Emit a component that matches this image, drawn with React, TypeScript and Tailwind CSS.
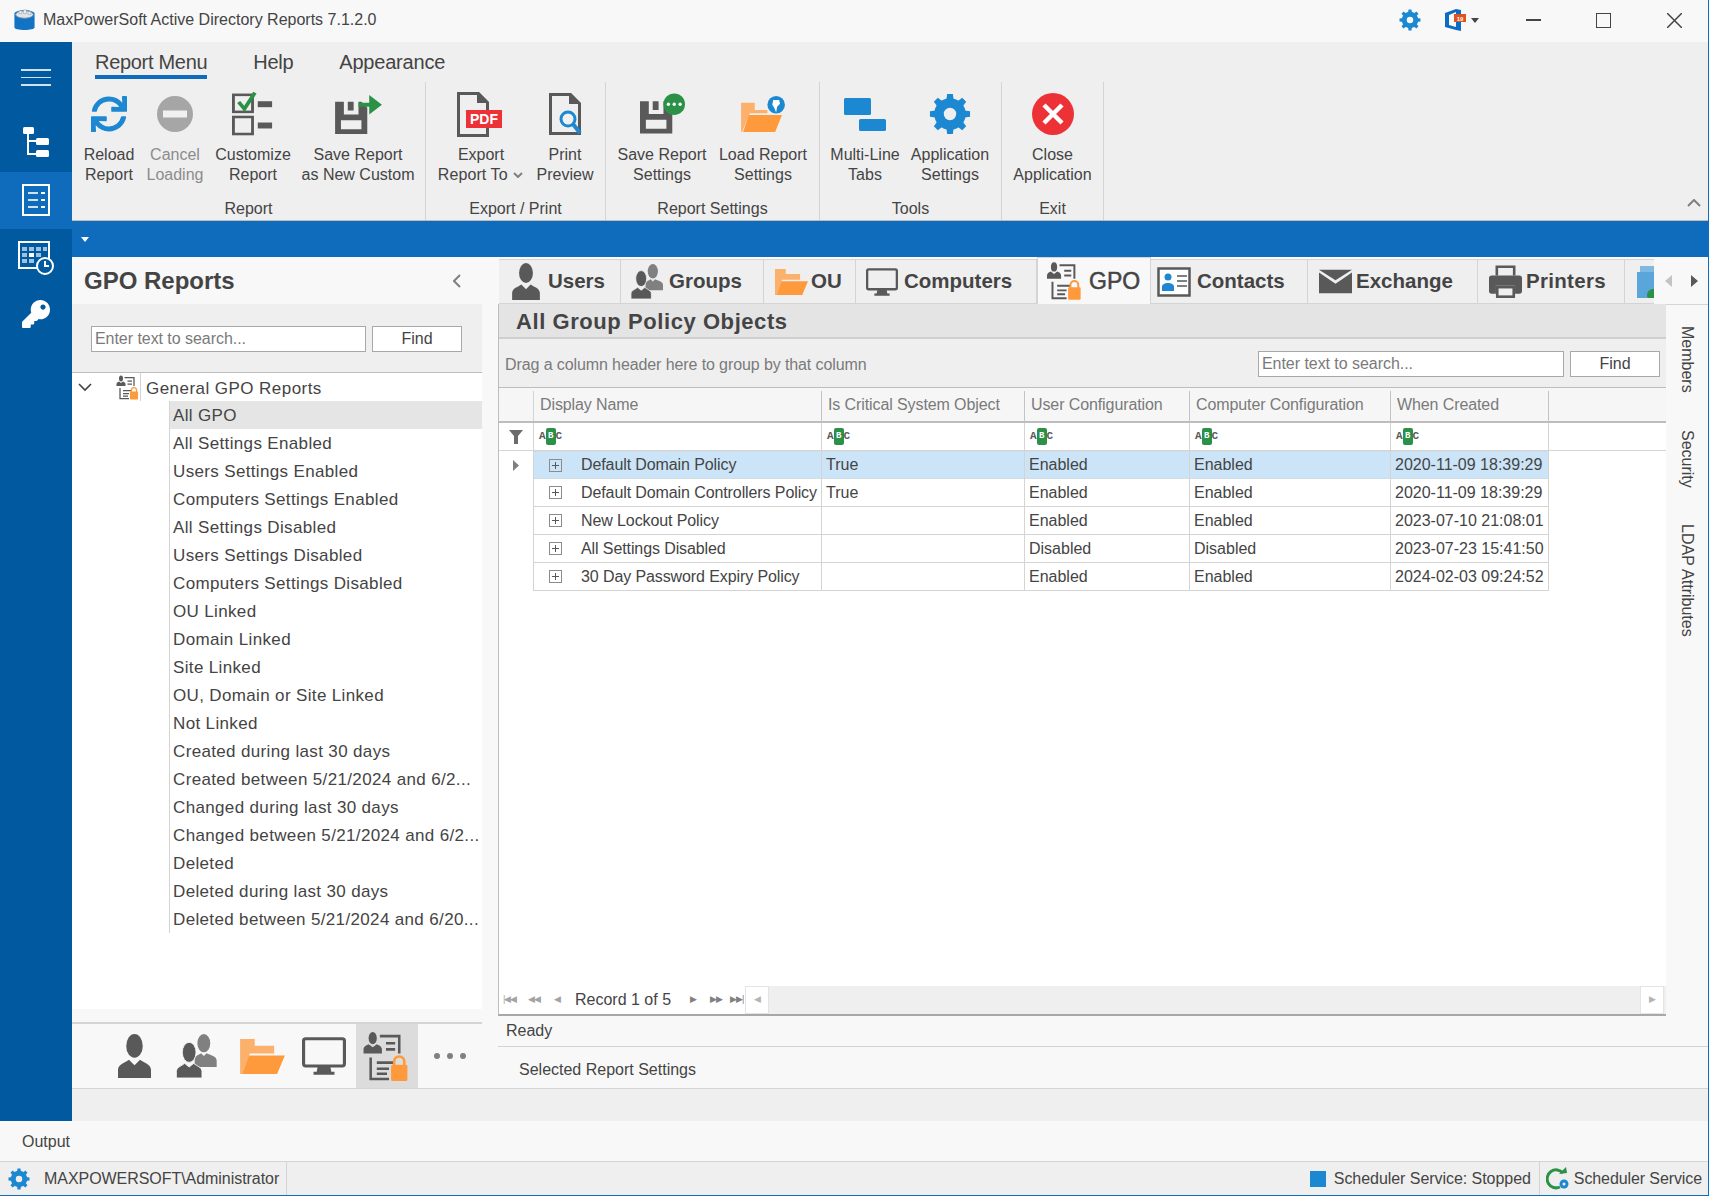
import React from "react";
import { FaKey, FaSync } from "react-icons/fa";

type IconProps = { className?: string };

const Gear = ({ className }: IconProps) => (
  <svg viewBox="0 0 44 44" className={className}>
    <circle cx="22" cy="22" r="11.5" fill="none" stroke="#1c88d1" strokeWidth="10" />
    {[0, 45, 90, 135, 180, 225, 270, 315].map((angle) => (
      <path key={angle} d="M18 9l1-8h6l1 8z" fill="#1c88d1" transform={`rotate(${angle} 22 22)`} />
    ))}
  </svg>
);

const Person = ({ className }: IconProps) => (
  <svg viewBox="0 0 36 48" className={className} fill="#595959">
    <ellipse cx="18" cy="13" rx="9" ry="13" />
    <path d="M0 48v-9c0-6 8-8 12-11l6 6 6-6c4 3 12 5 12 11v9z" />
  </svg>
);

const Group = ({ className }: IconProps) => (
  <svg viewBox="0 0 44 48" className={className}>
    <g fill="#808080">
      <ellipse cx="30" cy="10" rx="7" ry="10" />
      <path d="M20 36v-8c0-4 4-5 7-7l3 3 3-3c4 2 11 3 11 8v7z" />
    </g>
    <g fill="#595959" stroke="#f8f8f8" strokeWidth="1">
      <ellipse cx="14" cy="20" rx="7.5" ry="11" />
      <path d="M0 48v-7c0-5 6-6 9-9l5 4 5-4c3 3 9 4 9 9v7z" />
    </g>
  </svg>
);

const Folder = ({ className }: IconProps) => (
  <svg viewBox="0 0 46 36" className={className}>
    <path d="M0 0h15v7h20v8H10L2 36H0z" fill="#fbb16b" />
    <path d="M9 17h37l-8 19H2z" fill="#ff9a3c" />
  </svg>
);

const Monitor = ({ className }: IconProps) => (
  <svg viewBox="0 0 42 36" className={className}>
    <rect x="1.5" y="1.5" width="39" height="26" rx="2" fill="none" stroke="#595959" strokeWidth="3" />
    <path d="M15 28h12l1 5h3v3H11v-3h3z" fill="#595959" />
  </svg>
);

const Gpo = ({ className }: IconProps) => (
  <svg viewBox="0 0 46 50" className={className}>
    <g fill="#595959">
      <ellipse cx="9" cy="7" rx="4" ry="6" />
      <path d="M0 22v-4c0-3 3-4 5-5l4 3 4-3c2 1 5 2 5 5v4z" />
    </g>
    <path d="M16 5h19v17M22 12h9M22 18h9" fill="none" stroke="#595959" strokeWidth="2.5" />
    <path d="M7 26v21h18M13 31h17M13 37h12M13 42h10" fill="none" stroke="#595959" strokeWidth="2.5" />
    <path d="M30 34v-4a5 5 0 0110 0v4" fill="none" stroke="#ff9a3c" strokeWidth="2.5" />
    <rect x="27" y="33" width="16" height="16" rx="1.5" fill="#ff9a3c" />
  </svg>
);

const Contact = ({ className }: IconProps) => (
  <svg viewBox="0 0 34 30" className={className}>
    <rect x="1.5" y="1.5" width="31" height="27" fill="#fff" stroke="#595959" strokeWidth="2.5" />
    <circle cx="11" cy="10" r="3.5" fill="#1c88d1" />
    <path d="M5 24v-4c0-3 3-4 6-4s6 1 6 4v4z" fill="#1c88d1" />
    <path d="M20 9h10M20 14h10M20 19h10" stroke="#808080" strokeWidth="2" />
  </svg>
);

const Mail = ({ className }: IconProps) => (
  <svg viewBox="0 0 38 27" className={className}>
    <path d="M0 3l19 13L38 3v24H0z" fill="#595959" />
    <path d="M0 0h38L19 12z" fill="#595959" />
  </svg>
);

const Printer = ({ className }: IconProps) => (
  <svg viewBox="0 0 38 38" className={className}>
    <path d="M9 12V2h20v10" fill="none" stroke="#595959" strokeWidth="3" />
    <path d="M3 12h32a3 3 0 013 3v15a3 3 0 01-3 3h-5v-9H8v9H3a3 3 0 01-3-3V15a3 3 0 013-3z" fill="#595959" />
    <rect x="9.5" y="25.5" width="19" height="11" fill="none" stroke="#595959" strokeWidth="3" />
  </svg>
);

const Floppy = ({ x = 0, y = 0 }: { x?: number; y?: number }) => (
  <path
    transform={`translate(${x} ${y})`}
    fillRule="evenodd"
    fill="#595959"
    d="M0 0h9v13h15V0h3l6 6v27H0zM6 19v9h21v-9zM13 0h6v9h-6z"
  />
);

const IconCustomize = () => (
  <svg viewBox="0 0 44 54" preserveAspectRatio="none" className="w-[42px] h-[46px]">
    <rect x="1.5" y="4.5" width="20" height="20" fill="none" stroke="#595959" strokeWidth="3" />
    <rect x="1.5" y="30.5" width="20" height="20" fill="none" stroke="#595959" strokeWidth="3" />
    <path d="M7 13l6 8L24 2" fill="none" stroke="#2a9146" strokeWidth="4" />
    <rect x="27" y="12" width="15" height="7" fill="#595959" />
    <rect x="27" y="37" width="15" height="7" fill="#595959" />
  </svg>
);

const IconSaveAs = () => (
  <svg viewBox="0 0 48 40" className="w-[47px] h-[39px]">
    <Floppy x={0} y={7} />
    <path d="M24 8h11V0l13 10-13 10v-8H24z" fill="#2a9146" />
  </svg>
);

const IconPdf = () => (
  <svg viewBox="0 0 45 45" className="mr-[3px] w-[45px] h-[45px]">
    <path d="M1.5 1.5h20l9 9v33h-29z" fill="none" stroke="#595959" strokeWidth="3" />
    <path d="M20 0l12 11H20z" fill="#595959" />
    <rect x="9" y="18" width="36" height="18" fill="#ed3237" />
    <text x="27" y="32" textAnchor="middle" fontSize="14" fontWeight="700" fill="#fff" fontFamily="Liberation Sans, sans-serif">PDF</text>
  </svg>
);

const IconPreview = () => (
  <svg viewBox="0 0 33 42" className="w-[33px] h-[42px]">
    <path d="M1.5 1.5h20l9 9v30h-29z" fill="none" stroke="#595959" strokeWidth="3" />
    <path d="M20 0l12 11H20z" fill="#595959" />
    <circle cx="19" cy="26" r="7" fill="#f0f0f0" stroke="#1c88d1" strokeWidth="3" />
    <path d="M24 31l7 9" stroke="#1c88d1" strokeWidth="4" />
  </svg>
);

const IconSaveSettings = () => (
  <svg viewBox="0 0 46 42" className="w-[45px] h-[42px]">
    <Floppy x={0} y={8} />
    <circle cx="35" cy="11" r="11" fill="#2a9146" />
    <circle cx="29" cy="11" r="1.7" fill="#fff" />
    <circle cx="35" cy="11" r="1.7" fill="#fff" />
    <circle cx="41" cy="11" r="1.7" fill="#fff" />
  </svg>
);

const IconLoad = () => (
  <svg viewBox="0 0 46 37" className="w-[45px] h-[36px]">
    <g transform="translate(0 7) scale(1 .83)">
      <path d="M0 0h14v9h13v4H9L1 36H0z" fill="#fbb16b" />
      <path d="M8 15h34l-7 21H2z" fill="#ff9a3c" />
    </g>
    <circle cx="36" cy="9" r="9" fill="#1c88d1" />
    <path d="M33 4h6l1 4-3 3-1 6-2-5-2-3z" fill="#fff" />
  </svg>
);

const IconTabs = () => (
  <svg viewBox="0 0 42 33" className="w-[42px] h-[33px]">
    <rect x="0" y="0" width="27" height="17" rx="1.5" fill="#1c88d1" />
    <rect x="15" y="21" width="27" height="12" rx="1.5" fill="#1c88d1" />
  </svg>
);

const IconClose = () => (
  <svg viewBox="0 0 42 42" className="w-[42px] h-[42px]">
    <circle cx="21" cy="21" r="21" fill="#ed3237" />
    <path d="M12 12l18 18M30 12L12 30" stroke="#fff" strokeWidth="4.5" />
  </svg>
);

const IconCancel = () => (
  <svg viewBox="0 0 36 36" className="w-[36px] h-[36px]">
    <circle cx="18" cy="18" r="18" fill="#a6a6a6" />
    <rect x="6" y="14.5" width="24" height="7" fill="#f0f0f0" />
  </svg>
);

const RibbonButton = ({ width, icon, label1, label2, muted }: { width: string; icon: React.ReactNode; label1: string; label2: React.ReactNode; muted?: boolean }) => (
  <div className={`flex flex-col items-center shrink-0 ${width}`}>
    <div className="flex items-center justify-center h-[50px]">{icon}</div>
    <div className={`mt-[6px] text-center text-[16px] leading-[20px] whitespace-nowrap ${muted ? "text-[#8c8c8c]" : "text-[#444]"}`}>
      <div>{label1}</div>
      <div>{label2}</div>
    </div>
  </div>
);

const RibbonGroup = ({ width, padding, title, children }: { width: string; padding: string; title: string; children: React.ReactNode }) => (
  <div className={`flex flex-col shrink-0 border-r border-[#d4d4d4] ${width}`}>
    <div className={`flex h-[113px] pt-[7px] ${padding}`}>{children}</div>
    <div className="mt-[4px] text-center text-[16px] leading-[20px] text-[#444]">{title}</div>
  </div>
);

const AbcIcon = () => (
  <span className="flex items-center h-[17px] font-['Liberation_Mono',monospace] font-bold text-[11px] leading-none text-[#595959]">
    A
    <span className="flex items-center justify-center w-[10px] h-[17px] rounded-[2px] bg-[#2a9146] text-[9px] text-white">B</span>
    C
  </span>
);

const treeItems = [
  "All GPO",
  "All Settings Enabled",
  "Users Settings Enabled",
  "Computers Settings Enabled",
  "All Settings Disabled",
  "Users Settings Disabled",
  "Computers Settings Disabled",
  "OU Linked",
  "Domain Linked",
  "Site Linked",
  "OU, Domain or Site Linked",
  "Not Linked",
  "Created during last 30 days",
  "Created between 5/21/2024 and 6/2...",
  "Changed during last 30 days",
  "Changed between 5/21/2024 and 6/2...",
  "Deleted",
  "Deleted during last 30 days",
  "Deleted between 5/21/2024 and 6/20...",
];

const tabs = [
  { name: "Users", width: "w-[122px]", pad: "pl-[13px] gap-[8px]", icon: <Person className="w-[28px] h-[37px]" /> },
  { name: "Groups", width: "w-[143px]", pad: "pl-[10px] gap-[6px]", icon: <Group className="w-[32px] h-[37px]" /> },
  { name: "OU", width: "w-[92px]", pad: "pl-[11px] gap-[3px]", icon: <Folder className="w-[33px] h-[30px]" /> },
  { name: "Computers", width: "w-[181px]", pad: "pl-[10px] gap-[6px]", icon: <Monitor className="w-[32px] h-[32px]" /> },
  { name: "GPO", width: "w-[114px]", pad: "pl-[9px] gap-[6px]", icon: <Gpo className="w-[36px] h-[40px]" />, active: true },
  { name: "Contacts", width: "w-[157px]", pad: "pl-[6px] gap-[6px]", icon: <Contact className="w-[34px] h-[30px]" /> },
  { name: "Exchange", width: "w-[170px]", pad: "pl-[11px] gap-[4px]", icon: <Mail className="w-[33px] h-[25px]" /> },
  { name: "Printers", width: "w-[147px]", pad: "pl-[11px] gap-[4px] tracking-[0.3px]", icon: <Printer className="w-[33px] h-[35px]" /> },
];

const rows = [
  ["Default Domain Policy", "True", "Enabled", "Enabled", "2020-11-09 18:39:29"],
  ["Default Domain Controllers Policy", "True", "Enabled", "Enabled", "2020-11-09 18:39:29"],
  ["New Lockout Policy", "", "Enabled", "Enabled", "2023-07-10 21:08:01"],
  ["All Settings Disabled", "", "Disabled", "Disabled", "2023-07-23 15:41:50"],
  ["30 Day Password Expiry Policy", "", "Enabled", "Enabled", "2024-02-03 09:24:52"],
];

const columns = [
  { name: "Display Name", width: "w-[288px]" },
  { name: "Is Critical System Object", width: "w-[203px]" },
  { name: "User Configuration", width: "w-[165px]" },
  { name: "Computer Configuration", width: "w-[201px]" },
  { name: "When Created", width: "w-[158px]" },
];

const selectedCell = "bg-[#cce4f7] border-t border-dotted border-[#444] [border-right-style:solid] border-r-[#d4d4d4]";

const SearchBar = ({ inputWidth, findWidth, gap }: { inputWidth: string; findWidth: string; gap: string }) => (
  <div className={`flex ${gap}`}>
    <div className={`h-[26px] border border-[#a8a8a8] bg-white px-[3px] text-[16px] leading-[24px] text-[#7a7a7a] tracking-[-0.05px] ${inputWidth}`}>Enter text to search...</div>
    <div className={`h-[26px] border border-[#a8a8a8] bg-white text-center text-[16px] leading-[24px] text-[#444] ${findWidth}`}>Find</div>
  </div>
);

const Pager = () => (
  <div className="flex items-center h-[28px] bg-white">
    <div className="flex items-center w-[246px] pl-[4px] text-[#a3a3a3] text-[9px] tracking-[-1px]">
      <span className="w-[20px]">|◀◀</span>
      <span className="w-[26px] ml-[5px]">◀◀</span>
      <span className="w-[24px]">◀</span>
      <span className="text-[16px] text-[#444] tracking-normal w-[115px] ml-[-3px]">Record 1 of 5</span>
      <span className="w-[20px] text-[#808080]">▶</span>
      <span className="w-[20px] text-[#808080]">▶▶</span>
      <span className="text-[#808080]">▶▶|</span>
    </div>
    <div className="flex flex-1 justify-between items-center h-full bg-[#efefef] pr-[2px]">
      <div className="flex items-center justify-center w-[24px] h-full bg-white border border-[#e4e4e4] text-[9px] text-[#b5b5b5]">◀</div>
      <div className="flex items-center justify-center w-[24px] h-full bg-white border border-[#e4e4e4] text-[9px] text-[#b5b5b5]">▶</div>
    </div>
  </div>
);

export default function App() {
  return (
    <div className="w-[1710px] h-[1196px] bg-white font-['Liberation_Sans',sans-serif] text-[#444]">
      <div className="flex flex-col w-[1708px] h-[1195px] border-r border-b border-[#0f6cbd] box-content">
        {/* title bar */}
        <div className="flex items-center h-[42px] bg-[#f8f8f8] shrink-0 pl-[13px] pb-[2px]">
          <svg viewBox="0 0 24 24" className="w-[23px] h-[22px]">
            <path d="M1 5c0-2 5-4 11-4s11 2 11 4v15c0 2-5 3-11 3S1 22 1 20z" fill="#1273c4" />
            <ellipse cx="12" cy="6" rx="9.5" ry="4" fill="#dfe6ea" stroke="#8a9aa5" strokeWidth="1" />
            <path d="M6 5V2h3v3zM11 5V1h3v4zM16 6V3h3v3z" fill="#f5f5f5" stroke="#8a9aa5" strokeWidth=".6" />
          </svg>
          <span className="ml-[7px] text-[16px] text-[#444]">MaxPowerSoft Active Directory Reports 7.1.2.0</span>
          <div className="flex items-center ml-auto">
            <Gear className="w-[22px] h-[22px]" />
            <svg viewBox="0 0 22 22" className="ml-[23px] w-[22px] h-[22px]">
              <path d="M1 4l11-4 5 1v21l-5-1-11-3zM5 6v10l7 2V3z" fill="#0a6cc4" fillRule="evenodd" />
              <rect x="10" y="5" width="12" height="8" fill="#e2521d" />
              <text x="16" y="11.5" textAnchor="middle" fontSize="6" fontWeight="700" fill="#fff" fontFamily="Liberation Sans, sans-serif">19</text>
            </svg>
            <svg viewBox="0 0 8 5" className="ml-[5px] w-[8px] h-[5px]"><path d="M0 0h8L4 5z" fill="#444" /></svg>
            <div className="ml-[47px] w-[15px] h-[1.5px] bg-[#444]" />
            <div className="ml-[55px] w-[15px] h-[15px] border-[1.5px] border-[#444]" />
            <svg viewBox="0 0 15 15" className="ml-[56px] mr-[26px] w-[15px] h-[15px]"><path d="M0 0l15 15M15 0L0 15" stroke="#444" strokeWidth="1.5" /></svg>
          </div>
        </div>

        <div className="flex flex-1 min-h-0">
          {/* left nav */}
          <div className="flex flex-col items-center w-[72px] shrink-0 bg-[#015a9f]">
            <div className="flex flex-col gap-[6px] mt-[27px]">
              <div className="w-[30px] h-[1.5px] bg-[#cfe2f2]" />
              <div className="w-[30px] h-[1.5px] bg-[#cfe2f2]" />
              <div className="w-[30px] h-[1.5px] bg-[#cfe2f2]" />
            </div>
            <svg viewBox="0 0 26 31" className="mt-[41px] w-[26px] h-[31px]">
              <rect x="0" y="0" width="11" height="7" rx="1.5" fill="#fff" />
              <rect x="13" y="11" width="13" height="7" rx="1.5" fill="#fff" />
              <rect x="13" y="23" width="13" height="7" rx="1.5" fill="#fff" />
              <path d="M5 7v20h8M5 14h8" fill="none" stroke="#fff" strokeWidth="2" />
            </svg>
            <div className="flex items-center justify-center w-full h-[57px] mt-[14px] bg-[#0f6cbd]">
              <svg viewBox="0 0 28 32" className="w-[28px] h-[32px]">
                <rect x="1" y="1" width="26" height="30" fill="none" stroke="#fff" strokeWidth="2" />
                <path d="M6 9h10M6 16h10M6 23h10" stroke="#cfe2f2" strokeWidth="2" />
                <path d="M19 9h4M19 16h4M19 23h4" stroke="#fff" strokeWidth="2" />
              </svg>
            </div>
            <svg viewBox="0 0 36 34" className="mt-[12px] w-[36px] h-[34px]">
              <rect x="1" y="1" width="30" height="26" fill="#015a9f" stroke="#fff" strokeWidth="2" />
              <g fill="#9cc2e0">
                <rect x="4" y="6" width="5" height="4" /><rect x="11" y="6" width="5" height="4" /><rect x="18" y="6" width="5" height="4" /><rect x="25" y="6" width="4" height="4" />
                <rect x="4" y="12" width="5" height="4" /><rect x="18" y="12" width="5" height="4" /><rect x="4" y="18" width="5" height="4" /><rect x="11" y="18" width="5" height="4" />
              </g>
              <rect x="11" y="12" width="5" height="4" fill="#fff" />
              <circle cx="27" cy="25" r="8" fill="#015a9f" stroke="#fff" strokeWidth="2" />
              <path d="M27 20v5h4" fill="none" stroke="#fff" strokeWidth="2" />
            </svg>
            <FaKey className="mt-[25px] w-[28px] h-[28px] text-white" />
          </div>

          <div className="flex flex-col flex-1 min-w-0">
            {/* ribbon */}
            <div className="flex flex-col h-[179px] shrink-0 bg-[#efefef] border-b border-[#bdbdbd]">
              <div className="flex h-[40px] pl-[23px] text-[20px] text-[#444]">
                <div className="h-[37px] border-b-[4px] border-[#0f6cbd] leading-[40px] tracking-[-0.3px]">Report Menu</div>
                <div className="ml-[46px] leading-[40px] tracking-[-0.3px]">Help</div>
                <div className="ml-[46px] leading-[40px] tracking-[-0.2px]">Appearance</div>
              </div>
              <div className="flex flex-1">
                <RibbonGroup width="w-[354px]" padding="pl-[7px]" title="Report">
                  <RibbonButton width="w-[60px]" icon={<FaSync className="w-[36px] h-[36px] text-[#1c88d1]" />} label1="Reload" label2="Report" />
                  <div className="w-[3px]" />
                  <RibbonButton width="w-[66px]" icon={<IconCancel />} label1="Cancel" label2="Loading" muted />
                  <RibbonButton width="w-[90px]" icon={<IconCustomize />} label1="Customize" label2="Report" />
                  <RibbonButton width="w-[120px]" icon={<IconSaveAs />} label1="Save Report" label2="as New Custom" />
                </RibbonGroup>
                <RibbonGroup width="w-[180px]" padding="pl-[15px] gap-[4px]" title="Export / Print">
                  <RibbonButton width="w-[80px]" icon={<IconPdf />} label1="Export" label2={<span className="ml-[-1px] tracking-[0.1px]">Report To <svg viewBox="0 0 10 6" className="inline ml-[1px] w-[10px] h-[6px] align-[2px]"><path d="M1 1l4 4 4-4" fill="none" stroke="#808080" strokeWidth="2" /></svg></span>} />
                  <RibbonButton width="w-[80px]" icon={<IconPreview />} label1="Print" label2="Preview" />
                </RibbonGroup>
                <RibbonGroup width="w-[214px]" padding="pl-[6px] gap-[1px]" title="Report Settings">
                  <RibbonButton width="w-[100px]" icon={<IconSaveSettings />} label1="Save Report" label2="Settings" />
                  <RibbonButton width="w-[100px]" icon={<IconLoad />} label1="Load Report" label2="Settings" />
                </RibbonGroup>
                <RibbonGroup width="w-[182px]" padding="pl-[5px]" title="Tools">
                  <RibbonButton width="w-[80px]" icon={<IconTabs />} label1="Multi-Line" label2="Tabs" />
                  <RibbonButton width="w-[90px]" icon={<Gear className="w-[42px] h-[42px]" />} label1="Application" label2="Settings" />
                </RibbonGroup>
                <RibbonGroup width="w-[102px]" padding="justify-center" title="Exit">
                  <RibbonButton width="w-[90px]" icon={<IconClose />} label1="Close" label2="Application" />
                </RibbonGroup>
                <div className="flex flex-1 justify-end items-end pr-[7px] pb-[13px]">
                  <svg viewBox="0 0 14 8" className="w-[14px] h-[8px]"><path d="M1 7l6-6 6 6" fill="none" stroke="#808080" strokeWidth="2" /></svg>
                </div>
              </div>
            </div>

            {/* blue bar */}
            <div className="flex items-center h-[36px] shrink-0 bg-[#0f6cbd] pl-[9px]">
              <svg viewBox="0 0 8 5" className="w-[8px] h-[5px]"><path d="M0 0h8L4 5z" fill="#fff" /></svg>
            </div>

            <div className="flex h-[831px] shrink-0 bg-[#f8f8f8]">
              {/* left panel */}
              <div className="flex flex-col w-[410px] shrink-0">
                <div className="flex items-center justify-between h-[47px] shrink-0 pl-[12px] pr-[21px]">
                  <span className="text-[24px] font-bold text-[#444]">GPO Reports</span>
                  <svg viewBox="0 0 8 14" className="w-[8px] h-[14px]"><path d="M7 1L1 7l6 6" fill="none" stroke="#808080" strokeWidth="2" /></svg>
                </div>
                <div className="flex items-center h-[69px] shrink-0 bg-[#efefef] border-b border-[#bdbdbd] pl-[19px] pt-[1px]">
                  <SearchBar inputWidth="w-[275px]" findWidth="w-[90px]" gap="gap-[6px]" />
                </div>
                <div className="flex flex-col h-[636px] shrink-0 bg-white">
                  <div className="flex items-center h-[28px] shrink-0">
                    <svg viewBox="0 0 14 9" className="ml-[6px] w-[14px] h-[9px]"><path d="M1 1l6 6 6-6" fill="none" stroke="#444" strokeWidth="1.6" /></svg>
                    <div className="flex items-center justify-end w-[49px] h-full border-r border-[#d4d4d4]">
                      <Gpo className="w-[24px] h-[25px]" />
                    </div>
                    <span className="ml-[5px] mt-[3px] text-[17px] leading-[24px] tracking-[0.45px]">General GPO Reports</span>
                  </div>
                  <div className="flex flex-col ml-[97px] border-l border-[#d4d4d4]">
                    {treeItems.map((item, index) => (
                      <div key={item} className={`h-[28px] pl-[3px] text-[17px] leading-[30px] tracking-[0.35px] whitespace-nowrap ${index === 0 ? "bg-[#e5e5e5]" : ""}`}>
                        {item}
                      </div>
                    ))}
                  </div>
                </div>
                <div className="h-[15px] shrink-0 border-b-2 border-[#d4d4d4]" />
                <div className="flex items-center flex-1">
                  <Person className="ml-[44px] w-[37px] h-[44px]" />
                  <Group className="ml-[22px] w-[43px] h-[44px]" />
                  <Folder className="ml-[21px] w-[47px] h-[35px]" />
                  <Monitor className="ml-[16px] w-[44px] h-[38px]" />
                  <div className="flex items-center justify-center ml-[10px] w-[62px] h-full bg-[#dcdcdc]">
                    <Gpo className="w-[48px] h-[51px]" />
                  </div>
                  <div className="flex gap-[7px] ml-[16px]">
                    <div className="w-[6px] h-[6px] rounded-full bg-[#808080]" />
                    <div className="w-[6px] h-[6px] rounded-full bg-[#808080]" />
                    <div className="w-[6px] h-[6px] rounded-full bg-[#808080]" />
                  </div>
                </div>
              </div>

              <div className="w-[16px] shrink-0" />

              {/* right panel */}
              <div className="flex flex-col flex-1 min-w-0">
                <div className="flex items-end h-[47px] shrink-0 pl-[1px] overflow-hidden">
                  {tabs.map((tab) => (
                    <div
                      key={tab.name}
                      className={`flex items-center shrink-0 border-r border-[#d4d4d4] ${tab.width} ${tab.pad} ${tab.active ? "h-[47px] bg-[#f8f8f8] border-l border-t" : "h-[45px] bg-[#efefef] border-t border-b border-[#d4d4d4]"}`}
                    >
                      {tab.icon}
                      <span className={tab.active ? "text-[23px] text-[#444] [-webkit-text-stroke:0.5px_#444]" : "text-[20.5px] font-bold text-[#444]"}>{tab.name}</span>
                    </div>
                  ))}
                  <div className="flex items-center h-[45px] w-[29px] shrink-0 pl-[12px] bg-[#efefef] border-t border-b border-[#d4d4d4] overflow-hidden">
                    <svg viewBox="0 0 20 32" className="w-[20px] h-[32px] shrink-0">
                      <path d="M3 0h17v6H3z" fill="#7fb8e0" />
                      <path d="M0 6h20v26H0z" fill="#5aa5d9" />
                      <circle cx="16" cy="29" r="6" fill="#2a9146" />
                    </svg>
                  </div>
                  <div className="flex items-center justify-center gap-[19px] h-[47px] flex-1 bg-[#f8f8f8]">
                    <svg viewBox="0 0 7 12" className="w-[7px] h-[12px]"><path d="M7 0v12L0 6z" fill="#c4c4c4" /></svg>
                    <svg viewBox="0 0 7 12" className="w-[7px] h-[12px]"><path d="M0 0v12l7-6z" fill="#595959" /></svg>
                  </div>
                </div>

                <div className="flex h-[712px] shrink-0">
                  <div className="flex flex-col w-[1168px] shrink-0 border-l border-[#bdbdbd] border-b-2 border-b-[#a8a8a8]">
                    <div className="flex items-center h-[33px] shrink-0 pl-[17px] pt-[2px] bg-[#e4e4e4] text-[22px] font-bold tracking-[0.57px] text-[#444]">All Group Policy Objects</div>
                    <div className="flex items-center justify-between h-[51px] shrink-0 bg-[#efefef] border-t-2 border-b border-t-[#cfcfcf] border-b-[#bdbdbd] pl-[6px] pr-[6px] pt-[2px]">
                      <span className="mt-[1px] text-[16px] text-[#7a7a7a] tracking-[-0.1px]">Drag a column header here to group by that column</span>
                      <SearchBar inputWidth="w-[306px]" findWidth="w-[90px]" gap="gap-[6px]" />
                    </div>
                    {/* grid */}
                    <div className="flex flex-col flex-1 min-h-0 bg-white">
                      <div className="flex h-[35px] shrink-0 bg-[#f6f6f6] border-b-2 border-[#bdbdbd] pt-[3px]">
                        <div className="w-[35px] shrink-0 border-r border-[#d4d4d4]" />
                        {columns.map((col) => (
                          <div key={col.name} className={`shrink-0 pl-[6px] border-r border-[#c4c4c4] text-[16px] leading-[28px] text-[#7a7a7a] tracking-[-0.1px] ${col.width}`}>{col.name}</div>
                        ))}
                      </div>
                      <div className="flex h-[28px] shrink-0 border-b border-[#d4d4d4]">
                        <div className="flex items-center justify-center w-[35px] shrink-0 border-r border-[#d4d4d4]">
                          <svg viewBox="0 0 14 14" className="w-[14px] h-[14px]"><path d="M0 0h14L9 6v8H5V6z" fill="#6b6b6b" /></svg>
                        </div>
                        {columns.map((col) => (
                          <div key={col.name} className={`flex items-center shrink-0 pl-[5px] border-r border-[#d4d4d4] ${col.width}`}><AbcIcon /></div>
                        ))}
                      </div>
                      {rows.map((row, rowIndex) => (
                        <div key={row[0]} className="flex h-[28px] shrink-0">
                          <div className="flex items-center justify-center w-[35px] shrink-0 border-r border-[#d4d4d4]">
                            {rowIndex === 0 && <svg viewBox="0 0 6 11" className="w-[6px] h-[11px]"><path d="M0 0v11l6-5.5z" fill="#808080" /></svg>}
                          </div>
                          <div className={`flex items-center shrink-0 border-r border-b border-[#d4d4d4] ${columns[0].width} ${rowIndex === 0 ? selectedCell : ""}`}>
                            <svg viewBox="0 0 13 13" className="ml-[15px] w-[13px] h-[13px] shrink-0">
                              <rect x=".5" y=".5" width="12" height="12" fill="none" stroke="#8c8c8c" />
                              <path d="M6.5 3v7M3 6.5h7" stroke="#595959" />
                            </svg>
                            <span className="ml-[19px] text-[16px] whitespace-nowrap tracking-[-0.1px]">{row[0]}</span>
                          </div>
                          {row.slice(1).map((cell, cellIndex) => (
                            <div key={cellIndex} className={`flex items-center shrink-0 pl-[4px] border-r border-b text-[16px] border-[#d4d4d4] ${columns[cellIndex + 1].width} ${rowIndex === 0 ? selectedCell : ""}`}>{cell}</div>
                          ))}
                        </div>
                      ))}
                      <div className="flex-1" />
                      <Pager />
                    </div>
                  </div>
                  {/* side tabs */}
                  <div className="flex flex-col items-center flex-1 pt-[21px] gap-[37px] border-t border-[#d4d4d4] text-[16px] text-[#444]">
                    <span className="[writing-mode:vertical-rl]">Members</span>
                    <span className="[writing-mode:vertical-rl]">Security</span>
                    <span className="[writing-mode:vertical-rl]">LDAP Attributes</span>
                  </div>
                </div>

                <div className="flex items-center h-[31px] shrink-0 pl-[8px] border-b border-[#d4d4d4] text-[16px]">Ready</div>
                <div className="flex items-center h-[41px] shrink-0 pl-[21px] pt-[5px] text-[16px]">Selected Report Settings</div>
              </div>
            </div>

            <div className="flex-1 bg-[#efefef] border-t border-[#d4d4d4]" />
          </div>
        </div>

        {/* output */}
        <div className="flex items-center h-[40px] shrink-0 pl-[22px] pt-[2px] bg-[#f8f8f8] text-[16px]">Output</div>

        {/* status bar */}
        <div className="flex items-center h-[34px] shrink-0 bg-[#efefef] border-t border-[#d4d4d4] text-[16px]">
          <div className="flex items-center h-full w-[287px] pl-[8px] border-r border-[#d4d4d4]">
            <Gear className="w-[22px] h-[22px]" />
            <span className="ml-[14px] tracking-[-0.05px]">MAXPOWERSOFT\Administrator</span>
          </div>
          <div className="flex items-center ml-auto h-full">
            <div className="w-[16px] h-[16px] bg-[#1c88d1]" />
            <span className="ml-[8px] tracking-[-0.05px]">Scheduler Service: Stopped</span>
            <div className="flex items-center h-full ml-[8px] pl-[6px] pr-[6px] border-l border-[#d4d4d4]">
              <svg viewBox="0 0 24 24" className="w-[24px] h-[24px]">
                <path d="M17 6a9 9 0 10-3 14" fill="none" stroke="#2a9146" strokeWidth="3" />
                <path d="M13 7l8-1-1-6z" fill="#2a9146" />
                <circle cx="18" cy="17" r="4.5" fill="#1c88d1" />
                <circle cx="18" cy="17" r="1.5" fill="#efefef" />
              </svg>
              <span className="ml-[4px] tracking-[-0.1px]">Scheduler Service</span>
            </div>
          </div>
        </div>
      </div>
    </div>
  );
}
